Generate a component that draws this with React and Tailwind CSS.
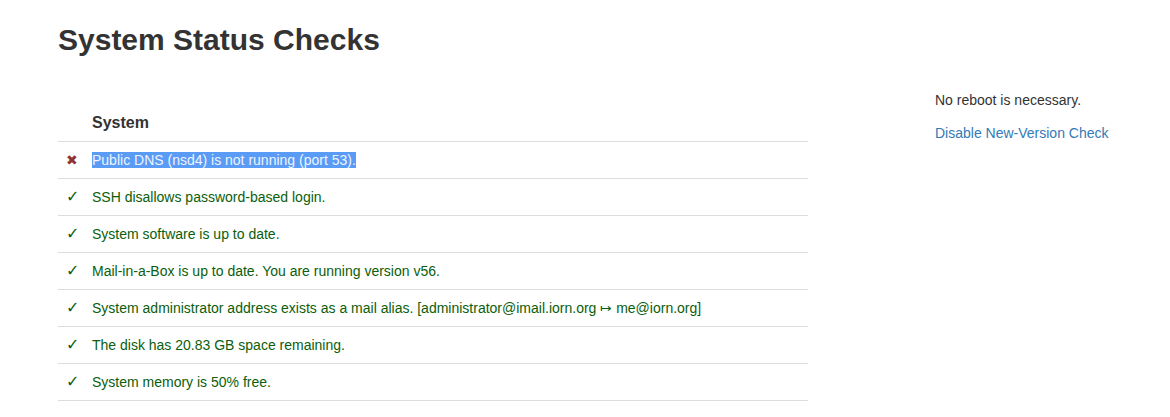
import React from "react";

const rows = [
  { ok: false, text: "Public DNS (nsd4) is not running (port 53)." },
  { ok: true, text: "SSH disallows password-based login." },
  { ok: true, text: "System software is up to date." },
  { ok: true, text: "Mail-in-a-Box is up to date. You are running version v56." },
  { ok: true, text: "System administrator address exists as a mail alias. [administrator@imail.iorn.org \u21A6 me@iorn.org]" },
  { ok: true, text: "The disk has 20.83 GB space remaining." },
  { ok: true, text: "System memory is 50% free." },
];

export default function App() {
  return (
    <div className="w-[1170px] h-[417px] bg-white overflow-hidden text-[#333] font-['Liberation_Sans',Arial,sans-serif]">
      <div className="pl-[58px]">
        <h2 className="mt-[23px] text-[30px] leading-[33px] font-bold text-[#333]">System Status Checks</h2>
        <div className="flex mt-[34px]">
          <table className="w-[750px] border-collapse text-[14px] leading-[20px]">
            <thead>
              <tr className="border-b border-[#ddd]">
                <th className="w-[26px] p-0"></th>
                <th className="text-left text-[16px] leading-[20px] font-bold pt-[23px] pb-[8px] pl-[8px] text-[#333]">System</th>
              </tr>
            </thead>
            <tbody>
              {rows.map((r, i) => (
                <tr key={i} className="border-b border-[#ddd]">
                  <td className="w-[26px] pl-[8px] py-[8px] align-top">
                    {r.ok ? (
                      <span className="font-['DejaVu_Sans',sans-serif] text-[16px] font-bold text-[#0b5e0b]">{"\u2713"}</span>
                    ) : (
                      <span className="font-['DejaVu_Sans',sans-serif] text-[14px] text-[#8e3333]">{"\u2716"}</span>
                    )}
                  </td>
                  <td className="py-[8px] pl-[8px]">
                    {r.ok ? (
                      <span className="text-[#0b5e0b]">{r.text}</span>
                    ) : (
                      <span className="bg-[#5a9bf5] text-[#eef4ff]">{r.text}</span>
                    )}
                  </td>
                </tr>
              ))}
            </tbody>
          </table>
          <div className="ml-[127px] text-[14px] leading-[20px]">
            <p className="text-[#333]">No reboot is necessary.</p>
            <p className="mt-[13px] text-[#337ab7]">Disable New-Version Check</p>
          </div>
        </div>
      </div>
    </div>
  );
}
